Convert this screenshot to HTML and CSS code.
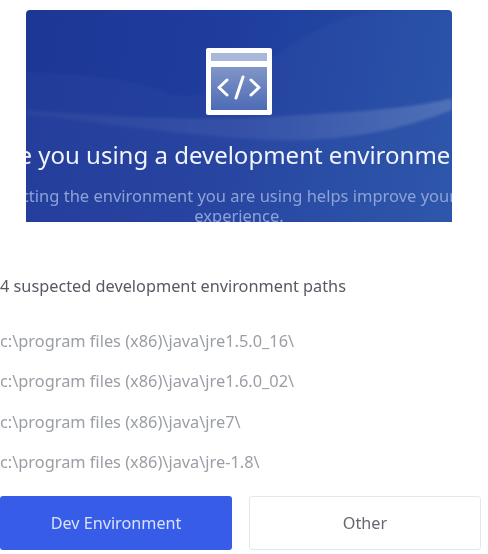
FILE: index.html
```html
<!DOCTYPE html>
<html lang="en">
<head>
<meta charset="utf-8">
<title>Development environment</title>
<link rel="stylesheet" href="styles.css">
</head>
<body>
<main class="page">
  <section class="banner">
    <svg class="waves" viewBox="0 0 426 212" preserveAspectRatio="none" aria-hidden="true">
      <defs>
        <linearGradient id="ribbonFill" x1="0" y1="0" x2="1" y2="0">
          <stop offset="0" stop-color="#fff" stop-opacity="0.03"/>
          <stop offset="0.6" stop-color="#fff" stop-opacity="0.07"/>
          <stop offset="1" stop-color="#fff" stop-opacity="0.16"/>
        </linearGradient>
      </defs>
      <path class="wave-a" d="M0 62C60 64 105 68 140 82C175 96 210 70 260 38C290 18 320 6 345 0H426V212H0Z"/>
      <path class="wave-b" d="M0 100C70 104 150 112 240 107C310 103 370 100 426 88V212H0Z"/>
      <path class="wave-c" d="M0 100C80 106 170 112 240 107C320 102 380 100 426 88V100C370 122 310 132 250 130C160 126 70 112 0 104Z"/>
    </svg>
    <svg class="icon" viewBox="0 0 66 67" aria-hidden="true">
      <defs>
        <linearGradient id="paneFill" x1="0" y1="0" x2="0" y2="1">
          <stop offset="0" stop-color="#8195c8"/>
          <stop offset="1" stop-color="#4d6bb5"/>
        </linearGradient>
      </defs>
      <rect x="0" y="0" width="66" height="67" rx="2" fill="#fff"/>
      <rect x="5" y="5" width="56" height="8" fill="#a9b8da"/>
      <rect x="5" y="19" width="56" height="43" fill="url(#paneFill)"/>
      <path class="code" d="M21 32L13 39.5L21 47M45 32L53 39.5L45 47M37 29L30 50"/>
    </svg>
    <h1 class="title">Are you using a development environment?</h1>
    <p class="subtitle"><span class="subtitle-lead">Selecting the environment you are using helps improve your</span> experience.</p>
  </section>
  <p class="count">4 suspected development environment paths</p>
  <ul class="paths">
    <li>c:\program files (x86)\java\jre1.5.0_16\</li>
    <li>c:\program files (x86)\java\jre1.6.0_02\</li>
    <li>c:\program files (x86)\java\jre7\</li>
    <li>c:\program files (x86)\java\jre-1.8\</li>
  </ul>
  <div class="actions">
    <button class="btn primary" type="button">Dev Environment</button>
    <button class="btn secondary" type="button">Other</button>
  </div>
</main>
</body>
</html>
```
FILE: styles.css
```css
* { box-sizing: border-box; }
html, body { margin: 0; background: #fff; }
body { width: 488px; height: 554px; overflow: hidden; font-family: "Noto Sans", "Open Sans", sans-serif; }
.page { display: flex; flex-direction: column; padding-top: 10px; filter: blur(0.6px); }
.banner {
  position: relative;
  width: 426px;
  height: 212px;
  margin-left: 26px;
  border-radius: 4px 4px 0 0;
  overflow: hidden;
  display: flex;
  flex-direction: column;
  align-items: center;
  padding-top: 38px;
  background: linear-gradient(100deg, #1c3796 0%, #1f3d9d 45%, #2651a8 100%);
}
.waves { position: absolute; inset: 0; width: 100%; height: 100%; filter: blur(1.5px); }
.wave-a { fill: #fff; opacity: 0.025; }
.wave-b { fill: #fff; opacity: 0.02; }
.wave-c { fill: url(#ribbonFill); }
.icon { position: relative; width: 66px; height: 67px; flex: none; }
.code { fill: none; stroke: #fff; stroke-width: 3; stroke-linecap: round; stroke-linejoin: round; }
.title {
  position: relative;
  flex: none;
  margin: 20px 0 0;
  white-space: nowrap;
  font-size: 24px;
  line-height: 40px;
  font-weight: 400;
  color: #f2f4fb;
}
.subtitle {
  position: relative;
  flex: none;
  width: 500px;
  margin: 11px 0 0;
  text-align: center;
  font-size: 16.5px;
  line-height: 20px;
  color: #8ea2d6;
}
.subtitle-lead { display: block; margin-right: 42px; white-space: nowrap; }
.count { margin: 54px 0 0; font-size: 16.3px; line-height: 20px; color: #555a62; }
.paths { list-style: none; margin: 35px 0 0; padding: 0; display: flex; flex-direction: column; gap: 20.3px; }
.paths li { font-size: 16.35px; line-height: 20px; color: #9a9ea5; }
.actions { display: flex; gap: 17px; margin-top: 24px; }
.btn { height: 54px; font: inherit; font-size: 16.2px; border-radius: 3px; padding: 0; }
.primary { width: 232px; border: 0; background: #365ce8; color: #d9e2fb; }
.secondary { width: 232px; border: 1px solid #e6e7ee; background: #fff; color: #66686e; }
```
